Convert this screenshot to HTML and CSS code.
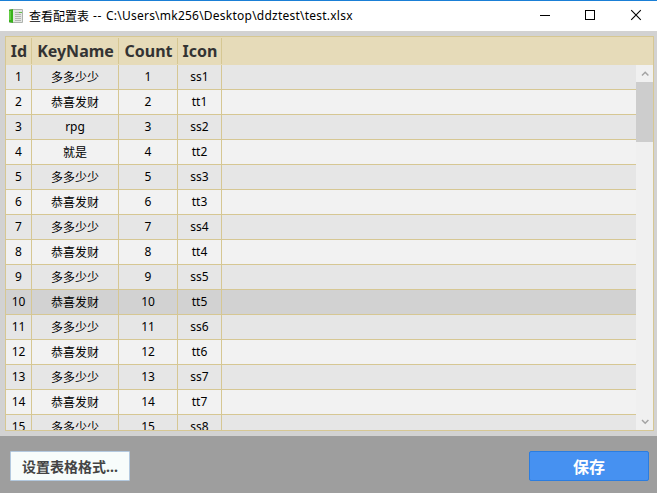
FILE: index.html
```html
<!DOCTYPE html>
<html lang="zh-CN">
<head>
<meta charset="utf-8">
<title>查看配置表</title>
<link rel="stylesheet" href="styles.css">
</head>
<body>
<div class="window">
  <header class="titlebar">
    <svg class="app-icon" width="14" height="14" viewBox="0 0 14 14">
      <rect width="14" height="14" rx="1" fill="#aeb3ae"/>
      <rect x="4" y="1" width="9" height="12" fill="#e4e6e4"/>
      <path d="M0 1 4 0v14l-4-1z" fill="#39b21d"/>
      <path d="M1 2v9" stroke="#8be66a"/>
      <path d="M6 3.5h6M6 5.5h6M6 7.5h6M6 9.5h6M6 11.5h6" stroke="#a3a8a3" stroke-width=".8"/>
      <path d="M10 3.5h3" stroke="#65bd4b"/>
    </svg>
    <h1 class="title"><span class="title-name">查看配置表</span><span class="dashes">--</span><span class="title-path">C:\Users\mk256\Desktop\ddztest\test.xlsx</span></h1>
    <div class="controls">
      <svg width="46" height="30" viewBox="0 0 46 30"><path d="M21 14.5h10" stroke="#000" shape-rendering="crispEdges"/></svg>
      <svg width="46" height="30" viewBox="0 0 46 30"><rect x="20.5" y="9.5" width="9" height="9" fill="none" stroke="#000"/></svg>
      <svg width="46" height="30" viewBox="0 0 46 30"><path d="m20.2 9.2 9.6 9.6m0-9.6-9.6 9.6" stroke="#000" stroke-width="1.1"/></svg>
    </div>
  </header>
  <main class="content">
    <div class="grid">
      <div class="row head"><span>Id</span><span>KeyName</span><span>Count</span><span>Icon</span></div>
      <div class="body">
        <div class="rows">
          <div class="row"><span>1</span><span class="han">多多少少</span><span>1</span><span>ss1</span></div>
          <div class="row"><span>2</span><span class="han">恭喜发财</span><span>2</span><span>tt1</span></div>
          <div class="row"><span>3</span><span>rpg</span><span>3</span><span>ss2</span></div>
          <div class="row"><span>4</span><span class="han">就是</span><span>4</span><span>tt2</span></div>
          <div class="row"><span>5</span><span class="han">多多少少</span><span>5</span><span>ss3</span></div>
          <div class="row"><span>6</span><span class="han">恭喜发财</span><span>6</span><span>tt3</span></div>
          <div class="row"><span>7</span><span class="han">多多少少</span><span>7</span><span>ss4</span></div>
          <div class="row"><span>8</span><span class="han">恭喜发财</span><span>8</span><span>tt4</span></div>
          <div class="row"><span>9</span><span class="han">多多少少</span><span>9</span><span>ss5</span></div>
          <div class="row hover"><span>10</span><span class="han">恭喜发财</span><span>10</span><span>tt5</span></div>
          <div class="row"><span>11</span><span class="han">多多少少</span><span>11</span><span>ss6</span></div>
          <div class="row"><span>12</span><span class="han">恭喜发财</span><span>12</span><span>tt6</span></div>
          <div class="row"><span>13</span><span class="han">多多少少</span><span>13</span><span>ss7</span></div>
          <div class="row"><span>14</span><span class="han">恭喜发财</span><span>14</span><span>tt7</span></div>
          <div class="row"><span>15</span><span class="han">多多少少</span><span>15</span><span>ss8</span></div>
        </div>
        <div class="scrollbar">
          <svg width="17" height="17" viewBox="0 0 17 17"><path d="m6 10.5 3.2-3.2 3.2 3.2" fill="none" stroke="#a3a3a3" stroke-width="1.5"/></svg>
          <div class="thumb"></div>
          <svg class="down" width="17" height="17" viewBox="0 0 17 17"><path d="m6 7 3.2 3.2L12.400 7" fill="none" stroke="#a3a3a3" stroke-width="1.5"/></svg>
        </div>
      </div>
    </div>
  </main>
  <footer class="footer">
    <button class="button">设置表格格式...</button>
    <button class="button primary">保存</button>
  </footer>
</div>
</body>
</html>
```

FILE: styles.css
```css
* { box-sizing: border-box; }
body {
  margin: 0;
  overflow: hidden;
  font: 12px "Noto Sans", "Noto Sans CJK SC", sans-serif;
  color: #000;
}
.window {
  display: flex;
  flex-direction: column;
  width: 657px;
  height: 493px;
}
.titlebar {
  display: flex;
  align-items: center;
  height: 31px;
  padding-left: 9px;
  border-top: 1px solid #1a7fd6;
  background: #fff;
}
.app-icon { flex: none; margin-right: 6px; }
.title {
  display: flex;
  gap: 4px;
  margin: 0;
  font-size: 12px;
  font-weight: 400;
  line-height: 30px;
  white-space: nowrap;
}
.title-name { line-height: 32px; height: 30px; }
.dashes { width: 9px; letter-spacing: 0.6px; }
.title-path { letter-spacing: 0.23px; }
.controls { display: flex; margin-left: auto; }
.content {
  height: 405px;
  padding: 5px 3px 5px 5px;
  background: #d2d2d2;
}
.grid {
  display: flex;
  flex-direction: column;
  height: 395px;
  border: 1px solid #d6c793;
  background: #f1f1f1;
}
.row {
  display: grid;
  flex: none;
  grid-template-columns: 26px 87px 59px 44px;
  height: 25px;
  border-bottom: 1px solid #d6c793;
  background: #f2f2f2;
  line-height: 23px;
  text-align: center;
}
.row:nth-child(odd) { background: #e6e6e6; }
.row.hover { background: #d2d2d2; }
.row span {
  height: 24px;
  border-right: 1px solid #d6c793;
  white-space: nowrap;
}
.row .han { line-height: 25px; }
.row.head {
  height: 28px;
  padding-top: 1px;
  border: 0;
  background: #e6dbb9;
  color: #333;
  font-size: 16px;
  font-weight: 700;
  line-height: 26px;
}
.row.head span { height: 26px; padding-left: 1px; }
.body { display: flex; flex: 1; min-height: 0; }
.rows { display: flex; flex: 1; flex-direction: column; overflow: hidden; }
.scrollbar {
  display: flex;
  flex-direction: column;
  width: 17px;
  background: #f0f0f0;
}
.thumb { height: 60px; background: #cdcdcd; }
.down { margin-top: auto; }
.footer {
  display: flex;
  justify-content: space-between;
  height: 57px;
  padding: 15px 8px 0 10px;
  background: #9e9e9e;
}
.button {
  width: 120px;
  height: 30px;
  padding: 2px 0 0;
  border: 1px solid #b3c9df;
  border-radius: 1px;
  background: #f7fcfb;
  color: #444;
  font: 700 14px/26px "Noto Sans", "Noto Sans CJK SC", sans-serif;
}
.button.primary {
  border-color: #2b7de0;
  border-radius: 2px;
  background: #4691f1;
  color: #fff;
  font-size: 16px;
}
```
